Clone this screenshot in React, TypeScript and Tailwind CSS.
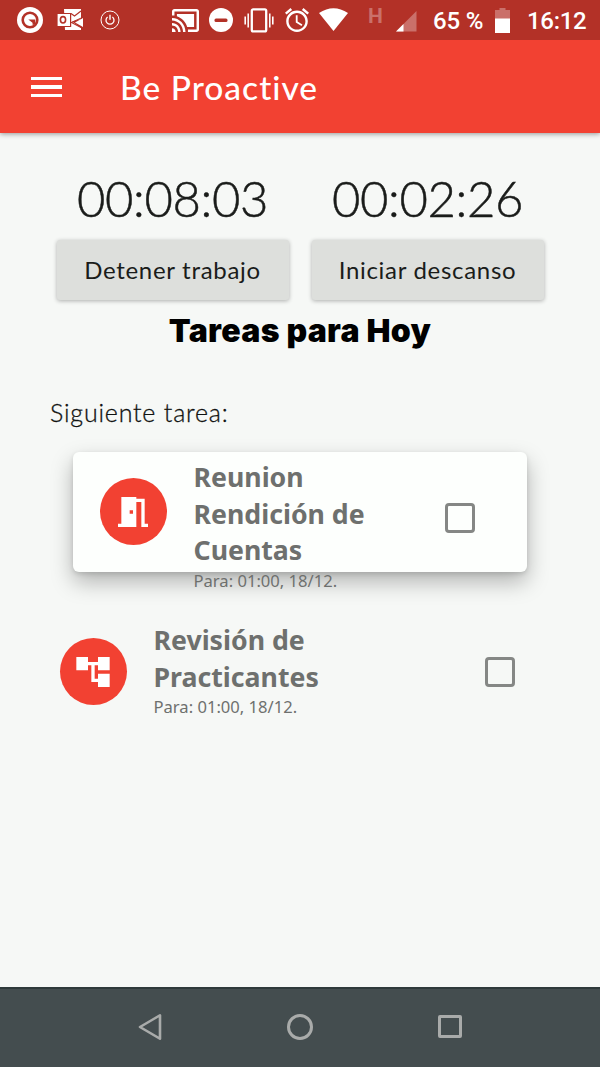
import React from "react";

type IconProps = { className: string; viewBox: string; children: React.ReactNode };

function Icon({ className, viewBox, children }: IconProps) {
  return (
    <svg className={`block shrink-0 ${className}`} viewBox={viewBox} fill="currentColor" preserveAspectRatio="none">
      {children}
    </svg>
  );
}

function StatusBar() {
  return (
    <div className="relative z-10 flex h-10 items-start bg-[#b33127] text-white">
      <Icon className="mt-[7px] ml-[17px] h-[26px] w-[26px]" viewBox="0 0 26 26">
        <circle cx="13" cy="13" r="13" />
        <circle cx="13" cy="13" r="7.3" fill="none" stroke="#b33127" strokeWidth="2.6" />
        <path d="M11.3 12.6h7v4.2l-2.6 1.4-.2-2.4z" fill="#b33127" />
      </Icon>
      <Icon className="mt-[9px] ml-[14px] h-[21px] w-[26px]" viewBox="0 0 26 21">
        <path d="M7 0h17v10l-9 2.5L24 19v2H8z" />
        <path d="M26 9v9l-8-4.5z" />
        <path d="M26 8.2L14.5 13.5L26 19.5" fill="none" stroke="#b33127" strokeWidth="1.1" />
        <path d="M14 4.5l3.5 2.5L24 2" fill="none" stroke="#b33127" strokeWidth="1.2" />
        <path d="M0 4.5h13.6v13H0z" stroke="#b33127" strokeWidth="1.2" />
        <ellipse cx="6" cy="10.8" rx="2.6" ry="3.2" fill="none" stroke="#b33127" strokeWidth="1.6" />
      </Icon>
      <Icon className="mt-[10px] ml-[17px] h-5 w-5" viewBox="0 0 20 20">
        <g fill="none" stroke="currentColor">
          <circle cx="10" cy="10" r="9" strokeWidth="1" />
          <path d="M7.6 7a4 4 0 1 0 4.8 0" strokeWidth="1.3" />
          <path d="M10 4.8v5" strokeWidth="1.4" />
        </g>
      </Icon>
      <Icon className="mt-[9px] ml-[52px] h-[23px] w-[27px]" viewBox="1 3 22 18">
        <path d="M19 7H5v1.63c3.96 1.28 7.09 4.41 8.37 8.37H19V7zM1 18v3h3c0-1.66-1.34-3-3-3zm0-4v2c2.76 0 5 2.24 5 5h2c0-3.87-3.13-7-7-7zm0-4v2c4.97 0 9 4.03 9 9h2c0-6.08-4.93-11-11-11zm20-7H3c-1.1 0-2 .9-2 2v3h2V5h18v14h-7v2h7c1.1 0 2-.9 2-2V5c0-1.1-.9-2-2-2z" />
      </Icon>
      <Icon className="mt-2 ml-[10px] h-6 w-6" viewBox="0 0 24 24">
        <circle cx="12" cy="12" r="12" />
        <rect x="5.5" y="10.5" width="13" height="3.4" rx="1.5" fill="#b33127" />
      </Icon>
      <Icon className="mt-2 ml-[11px] h-[25px] w-[30px]" viewBox="0 0 30 25">
        <g fill="none" stroke="currentColor">
          <rect x="7.8" y="1.4" width="14.4" height="22" rx="1.4" strokeWidth="2.3" />
          <path d="M4.2 5.5v14M25.8 5.5v14" strokeWidth="1.5" />
          <path d="M1.2 8.5v8M28.8 8.5v8" strokeWidth="1.6" />
        </g>
      </Icon>
      <Icon className="mt-2 ml-[11px] h-6 w-6" viewBox="2 1.8 20 20.2">
        <path d="M22 5.72l-4.6-3.86-1.29 1.53 4.6 3.86L22 5.72zM7.88 3.39L6.6 1.86 2 5.71l1.29 1.53 4.59-3.85zM12.5 8H11v6l4.75 2.85.75-1.23-4-2.37V8zM12 4c-4.97 0-9 4.03-9 9s4.02 9 9 9c4.97 0 9-4.03 9-9s-4.03-9-9-9zm0 16c-3.87 0-7-3.13-7-7s3.13-7 7-7 7 3.13 7 7-3.13 7-7 7z" />
      </Icon>
      <Icon className="mt-2 ml-[10px] h-[23px] w-[29px]" viewBox="0 0 28 23">
        <path d="M0 5Q14-4.5 28 5L14 23z" />
      </Icon>
      <span className="mt-[6px] ml-[20px] w-[14px] shrink-0 font-['Roboto'] text-[21px] leading-[20px] font-bold text-[#ca706a]">H</span>
      <Icon className="mt-[11px] ml-[14px] h-[21px] w-[21px]" viewBox="0 0 21 21">
        <path d="M20.5 0v20.5H0z" fill="#ca706a" />
        <path d="M7.5 13v7.5H0z" />
      </Icon>
      <span className="mt-[7px] ml-[16px] w-[51px] shrink-0 font-['Roboto'] text-[24px] leading-[28px] font-medium tracking-[-0.2px] whitespace-nowrap">65 %</span>
      <Icon className="mt-2 ml-[11px] h-[25px] w-[15px]" viewBox="0 0 15 25">
        <path d="M0 2h4.5V0h6v2H15v9H0z" fill="#ca706a" />
        <path d="M0 10.5h15V25H0z" />
      </Icon>
      <span className="mt-[7px] ml-[17px] shrink-0 font-['Roboto'] text-[24px] leading-[28px] font-medium tracking-[-0.3px]">16:12</span>
    </div>
  );
}

function AppBar() {
  return (
    <header className="relative flex h-[93px] items-center bg-[#f24132] pl-[31px] text-white shadow-[0_1px_5px_rgba(0,0,0,0.4)]">
      <div className="mt-[1px] flex w-[31px] flex-col gap-[5px]">
        <div className="h-[3.5px] bg-white" />
        <div className="h-[3.5px] bg-white" />
        <div className="h-[3.5px] bg-white" />
      </div>
      <h1 className="mt-[1px] ml-[58px] font-['Lato',sans-serif] text-[33.5px] leading-[40px] font-medium tracking-[1px]">Be Proactive</h1>
    </header>
  );
}

function Timer({ time, action }: { time: string; action: string }) {
  return (
    <div className="flex w-[232px] flex-col items-center">
      <div className="h-[60px] font-['Lato',sans-serif] text-[49px] leading-[56px] font-light tracking-[-0.4px] whitespace-nowrap text-[#1a1c1a] [-webkit-text-stroke:0.5px_#1a1c1a]">
        {time}
      </div>
      <button className="mt-[10px] h-[60px] w-full rounded-[3px] bg-[#dddfdc] font-['Lato',sans-serif] text-[24px] tracking-[0.7px] whitespace-nowrap text-[#1a1c1a] shadow-[0_1px_4px_rgba(0,0,0,0.3)]">
        {action}
      </button>
    </div>
  );
}

function Task({ title, icon, floating }: { title: string[]; icon: React.ReactNode; floating?: boolean }) {
  return (
    <article
      className={
        floating
          ? "ml-[73px] flex h-[120px] w-[454px] items-start rounded-[6px] bg-[#fdfffd] pt-[7px] pl-[27px] shadow-[0_10px_22px_rgba(0,0,0,0.28),0_2px_5px_rgba(0,0,0,0.12)]"
          : "ml-[60px] flex h-[120px] w-[480px] items-start"
      }
    >
      <div className={`flex h-[67px] w-[67px] shrink-0 items-center justify-center rounded-full bg-[#f24132] text-white ${floating ? "mt-[19px]" : "mt-[16px]"}`}>
        {icon}
      </div>
      <div className="ml-[26.5px] w-[251px] shrink-0 font-['Noto_Sans',sans-serif] text-[#6e706e]">
        {title.map((line) => (
          <div key={line} className="text-[26.7px] leading-[36.6px] font-bold whitespace-nowrap">{line}</div>
        ))}
        <div className="text-[16.6px] leading-[24px] whitespace-nowrap">Para: 01:00, 18/12.</div>
      </div>
      <div className={`h-[30px] w-[30px] shrink-0 rounded-[4px] border-[3px] border-[#858785] ${floating ? "mt-[44px]" : "mt-[35px] ml-[80px]"}`} />
    </article>
  );
}

export default function App() {
  return (
    <div className="flex h-[1067px] w-[600px] flex-col overflow-hidden bg-[#f6f8f6]">
      <StatusBar />
      <AppBar />
      <main className="flex-1">
        <section className="flex gap-[23px] pt-[37px] pl-[56.5px]">
          <Timer time="00:08:03" action="Detener trabajo" />
          <Timer time="00:02:26" action="Iniciar descanso" />
        </section>
        <h2 className="mt-[9px] text-center font-['Inter',sans-serif] text-[32px] leading-[44px] font-black tracking-[0.3px] text-black">Tareas para Hoy</h2>
        <p className="mt-[41px] ml-[50px] font-['Lato',sans-serif] text-[25px] leading-[36px] font-light tracking-[0.8px] text-[#101210] [-webkit-text-stroke:0.3px_#101210]">Siguiente tarea:</p>
        <div className="mt-[22px] flex flex-col gap-[50px]">
          <Task
            floating
            title={["Reunion", "Rendición de", "Cuentas"]}
            icon={
              <Icon className="mr-[2px] h-[40px] w-[40px]" viewBox="0 0 24 24">
                <path d="M14 6v15H3v-2h2V3h9v1h5v15h2v2h-4V6h-3zm-4 5v2h2v-2h-2z" />
              </Icon>
            }
          />
          <Task
            title={["Revisión de", "Practicantes"]}
            icon={
              <Icon className="mr-[1px] h-[40px] w-[40px]" viewBox="0 0 24 24">
                <path d="M22 11V3h-7v3H9V3H2v8h7V8h2v10h4v3h7v-8h-7v3h-2V8h2v3z" />
              </Icon>
            }
          />
        </div>
      </main>
      <nav className="flex h-[80px] items-center border-t-2 border-[#2f3a3b] bg-[#444d4f] pb-[3px] pl-[138px] text-[#a9abaa]">
        <Icon className="h-[28px] w-[24px]" viewBox="0 0 24 30">
          <path d="M22 2.5v25L2 15z" fill="none" stroke="currentColor" strokeWidth="2.6" strokeLinejoin="round" />
        </Icon>
        <div className="ml-[125px] h-[26px] w-[26px] rounded-full border-[3px] border-[#a9abaa]" />
        <div className="ml-[125px] h-[23px] w-[24px] rounded-[2px] border-[3px] border-[#a9abaa]" />
      </nav>
    </div>
  );
}
